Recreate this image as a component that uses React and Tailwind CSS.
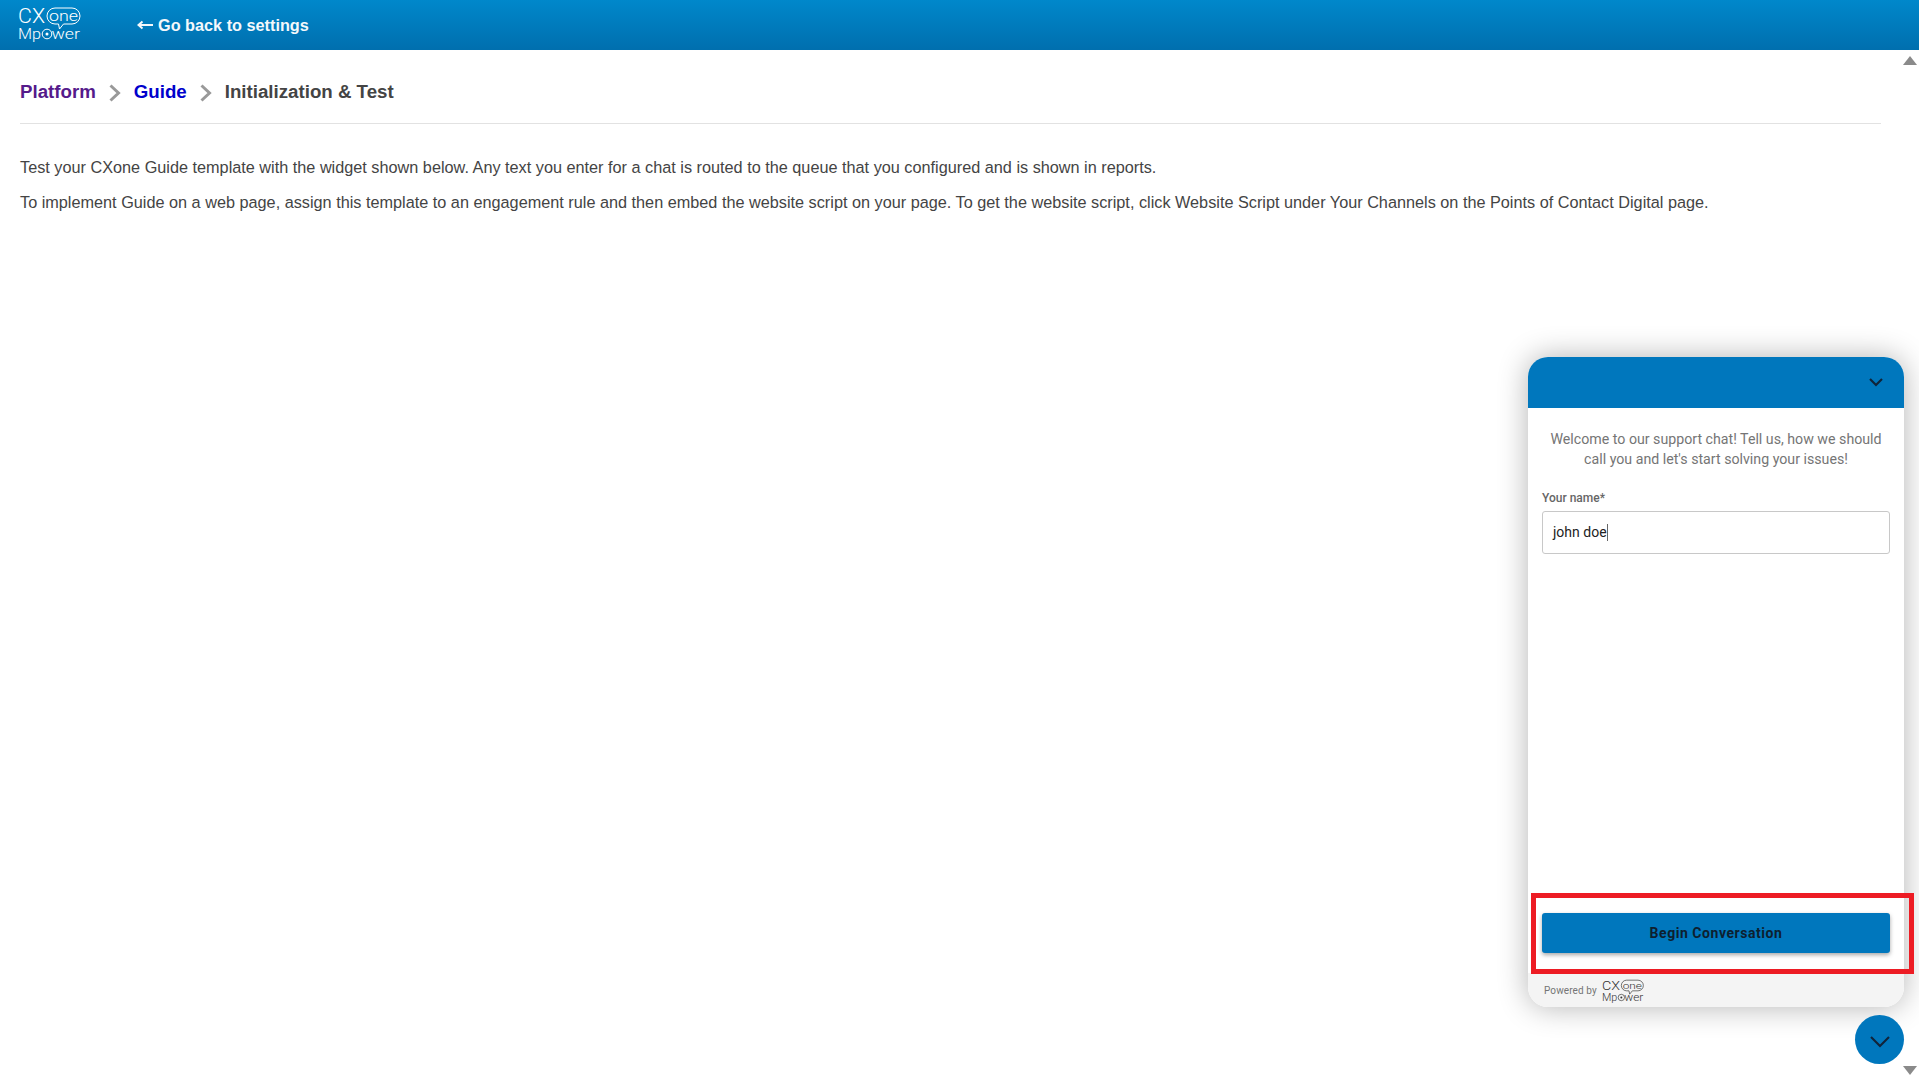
const FONT = "Roboto, 'Liberation Sans', sans-serif";

const Logo = ({ color, className }) => (
  <svg viewBox="0 0 66 36" className={className} fill="none" overflow="visible">
    <text x="0" y="15.500" fontFamily={FONT} fontWeight="300" fontSize="20" textLength="27" lengthAdjust="spacingAndGlyphs" fill={color}>CX</text>
    <path d="M37 1h17a8 8 0 0 1 0 16h-8.500l-4 5-1-5H37a8 8 0 0 1 0-16z" stroke={color} strokeWidth="1" />
    <text x="31" y="13.500" fontFamily={FONT} fontWeight="300" fontSize="14.500" textLength="29" lengthAdjust="spacingAndGlyphs" fill={color}>one</text>
    <text x="0" y="32" fontFamily={FONT} fontWeight="300" fontSize="15.500" textLength="23" lengthAdjust="spacingAndGlyphs" fill={color}>Mp</text>
    <circle cx="29" cy="27" r="4.800" stroke={color} strokeWidth="1" />
    <circle cx="29" cy="27" r="1.500" fill={color} />
    <text x="33.500" y="32" fontFamily={FONT} fontWeight="300" fontSize="15.500" textLength="28.500" lengthAdjust="spacingAndGlyphs" fill={color}>wer</text>
  </svg>
);

const Sep = () => (
  <svg viewBox="0 0 12 18" className="w-[12px] h-[18px]" fill="none">
    <path d="M1.500 1.500 L9.500 9 L1.500 16.500" stroke="#999999" strokeWidth="3" />
  </svg>
);

const Chevron = ({ className, width = 2 }) => (
  <svg viewBox="0 0 16 10" className={className} fill="none">
    <path d="M2 2 L8 8 L14 2" stroke="#10243a" strokeWidth={width} />
  </svg>
);

export default function App() {
  return (
    <div className="relative h-[1079px] w-full overflow-hidden bg-white font-['Liberation_Sans',Arial,sans-serif]">
      <header className="flex h-[50px] items-center bg-gradient-to-b from-[#0088cb] to-[#006fae]">
        <Logo color="#ffffff" className="ml-[18px] h-[36px] w-[66px]" />
        <a className="ml-[53px] flex items-center text-[16.25px] font-bold text-[#f4f8fb]">
          <svg viewBox="0 0 16 10" className="mr-[5px] h-[10px] w-[16px]" fill="none">
            <path d="M16 5H2M5.500 1.500 L1.500 5 L5.500 8.500" stroke="#f4f8fb" strokeWidth="2" />
          </svg>
          Go back to settings
        </a>
      </header>

      <main className="mr-[18px] px-[20px]">
        <nav className="flex h-[74px] items-center gap-[13px] border-b border-[#e2e2e2] pt-[12px] text-[18.7px] font-bold">
          <span className="text-[#551a8b]">Platform</span>
          <Sep />
          <span className="text-[#0000cc]">Guide</span>
          <Sep />
          <span className="text-[#444444]">Initialization &amp; Test</span>
        </nav>
        <p className="mt-[35px] text-[16.25px] leading-[17px] text-[#444444]">
          Test your CXone Guide template with the widget shown below. Any text you enter for a chat is routed to the queue that you configured and is shown in reports.
        </p>
        <p className="mt-[18px] text-[16.25px] leading-[17px] text-[#444444]">
          To implement Guide on a web page, assign this template to an engagement rule and then embed the website script on your page. To get the website script, click Website Script under Your Channels on the Points of Contact Digital page.
        </p>
      </main>

      <div className="absolute right-0 top-[50px] bottom-0 flex w-[19px] flex-col items-center justify-between pt-[6px] pb-[4px]">
        <div className="h-0 w-0 border-x-[7px] border-b-[9px] border-x-transparent border-b-[#8a8a8a]" />
        <div className="h-0 w-0 border-x-[7px] border-t-[9px] border-x-transparent border-t-[#8a8a8a]" />
      </div>

      <aside className="absolute left-[1528px] top-[357px] flex h-[650px] w-[376px] flex-col overflow-hidden rounded-[20px] bg-white shadow-[0_0_30px_rgba(0,0,0,0.3)] font-['Roboto',sans-serif]">
        <div className="flex h-[51px] shrink-0 items-center justify-end bg-[#0077bd] pb-[2px] pr-[20px]">
          <Chevron className="h-[10px] w-[16px]" width={2.2} />
        </div>
        <div className="flex flex-1 flex-col px-[14px]">
          <p className="mt-[21px] text-center text-[14.2px] leading-[20px] text-[#757575]">
            Welcome to our support chat! Tell us, how we should call you and let's start solving your issues!
          </p>
          <label className="mt-[21px] text-[12px] font-medium leading-[16px] text-[#666666]">Your name*</label>
          <div className="mt-[5px] flex h-[43px] items-center rounded-[3px] border border-[#c8c8c8] px-[10px] text-[14px] text-[#222222]">
            john doe<span className="h-[17px] w-px bg-[#666666]" />
          </div>
          <button className="mt-auto mb-[20px] h-[40px] rounded-[3px] bg-[#0077bd] text-[14px] font-bold tracking-[0.55px] text-[#0d1f30] shadow-[0_2px_4px_rgba(0,0,0,0.35)]">
            Begin Conversation
          </button>
        </div>
        <div className="flex h-[34px] shrink-0 items-center gap-[5px] bg-[#f4f4f4] pl-[16px]">
          <span className="text-[10px] tracking-[0.1px] text-[#757575]">Powered by</span>
          <Logo color="#333333" className="mt-[2px] h-[25px] w-[44px]" />
        </div>
      </aside>

      <button className="absolute left-[1855px] top-[1015px] flex h-[49px] w-[49px] items-center justify-center rounded-full bg-[#0077bd] pt-[4px]">
        <Chevron className="h-[15px] w-[24px]" width={1.4} />
      </button>

      <div className="pointer-events-none absolute left-[1531px] top-[893px] h-[81px] w-[383px] border-[5px] border-[#ed1c24]" />
    </div>
  );
}
